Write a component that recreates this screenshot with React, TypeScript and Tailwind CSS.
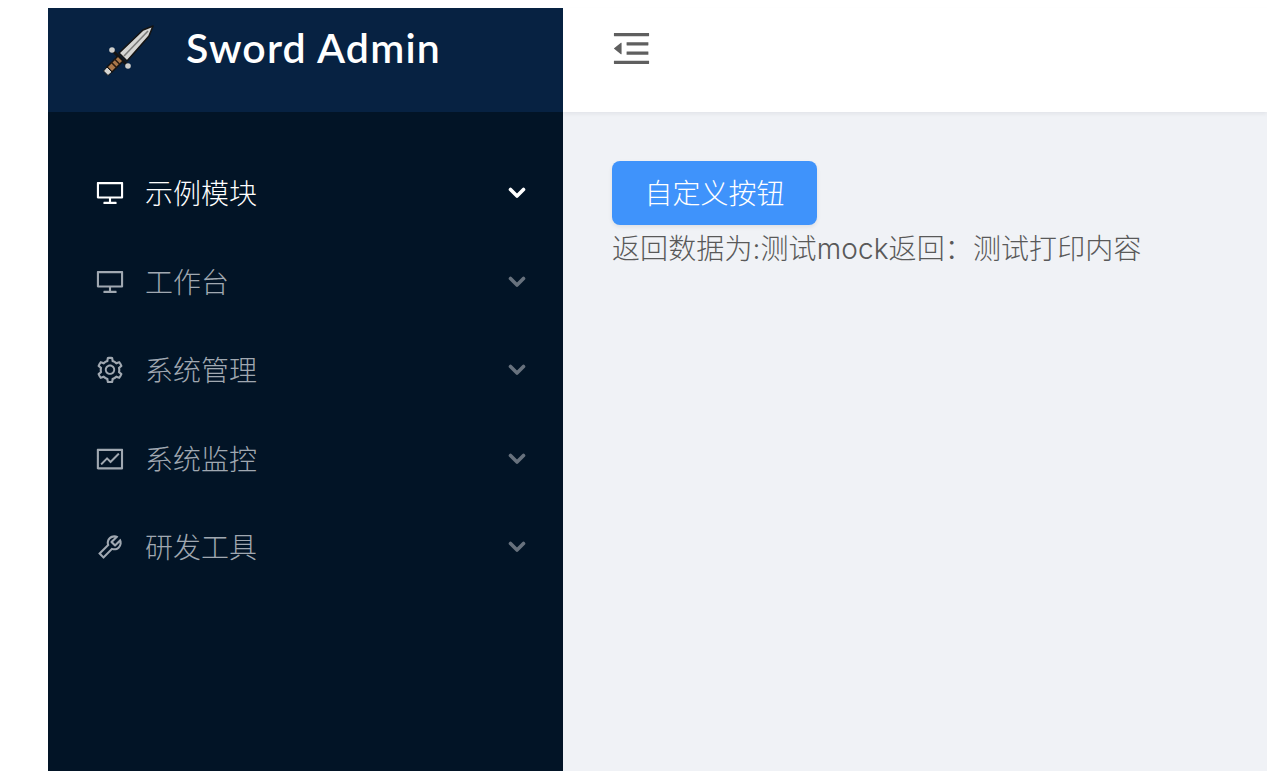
import { AiOutlineDesktop, AiOutlineSetting, AiOutlineFund, AiOutlineTool, AiOutlineMenuFold } from "react-icons/ai";

const items = [
  { label: "示例模块", Icon: AiOutlineDesktop, active: true },
  { label: "工作台", Icon: AiOutlineDesktop, active: false },
  { label: "系统管理", Icon: AiOutlineSetting, active: false },
  { label: "系统监控", Icon: AiOutlineFund, active: false },
  { label: "研发工具", Icon: AiOutlineTool, active: false },
];

function Sword() {
  return (
    <svg viewBox="0 0 54 52" className="w-[54px] h-[52px] shrink-0">
      <path d="M51 1 L41 5 L17 28 L25 36 L47 11 Z" fill="#d6d6d3" stroke="#141414" strokeWidth="1.6" strokeLinejoin="round" />
      <path d="M46 6 L22 31" stroke="#7c7c7a" strokeWidth="1.6" />
      <path d="M11 26 L25 40" stroke="#141414" strokeWidth="3" />
      <circle cx="10" cy="25" r="2.8" fill="#cfcfcc" />
      <circle cx="26" cy="41" r="2.8" fill="#cfcfcc" />
      <path d="M16 31 L21 36 L10 47 L5 42 Z" fill="#a9774a" stroke="#141414" strokeWidth="1.5" strokeLinejoin="round" />
      <path d="M12.5 34 L17.5 39 M9.5 37.5 L14.5 42.5" stroke="#2a1d12" strokeWidth="1.6" />
      <path d="M5 42 L10 47 L6 50.5 L1.5 46 Z" fill="#d6d6d3" stroke="#141414" strokeWidth="1" strokeLinejoin="round" />
    </svg>
  );
}

function Chevron({ active }: { active: boolean }) {
  return (
    <svg viewBox="0 0 18 12" className={active ? "w-[18px] h-[12px] text-white" : "w-[18px] h-[12px] text-[#67717d]"}>
      <path d="M2.5 2.5 L9 9 L15.5 2.5" fill="none" stroke="currentColor" strokeWidth="3.6" strokeLinecap="round" strokeLinejoin="round" />
    </svg>
  );
}

export default function App() {
  return (
    <div className="h-[771px] overflow-hidden bg-white pt-[8px] pl-[48px] flex font-['Inter','Noto_Sans_CJK_SC',sans-serif]">
      <aside className="w-[515px] shrink-0 bg-[#021426] flex flex-col">
        <div className="h-[104px] bg-[#072242] flex pl-[54px] pt-[17px] shrink-0">
          <Sword />
          <span className="ml-[30px] -mt-[2px] text-[41px] leading-[50px] tracking-[1.2px] font-semibold text-white font-['Lato',sans-serif]">Sword Admin</span>
        </div>
        <nav className="pt-[37px] flex flex-col">
          {items.map(({ label, Icon, active }) => (
            <div
              key={label}
              className={active ? "h-[88.5px] pl-[47px] pr-[37px] flex items-center text-white" : "h-[88.5px] pl-[47px] pr-[37px] flex items-center text-[#a0a8b1]"}
            >
              <Icon className="w-[30px] h-[30px] shrink-0" />
              <span className="ml-[20px] mt-[2px] flex-1 text-[28px] leading-[40px] font-light">{label}</span>
              <Chevron active={active} />
            </div>
          ))}
        </nav>
      </aside>
      <main className="flex-1 min-w-0 bg-[#f0f2f6] flex flex-col">
        <header className="h-[104px] shrink-0 bg-white shadow-[0_2px_4px_rgba(0,21,41,0.06)] pl-[46px] flex items-center pb-[24px]">
          <AiOutlineMenuFold className="w-[45px] h-[45px] text-[#5f5f5f]" />
        </header>
        <div className="pt-[49px] pl-[49px]">
          <button className="w-[205px] h-[64px] rounded-[8px] bg-[#3f93fb] pt-[2px] text-white text-[28px] font-light shadow-[0_2px_4px_rgba(0,0,0,0.08)]">自定义按钮</button>
          <p className="mt-[2px] text-[28px] leading-[44px] tracking-[0.1px] font-light text-[#595959] whitespace-nowrap">返回数据为:测试mock返回：测试打印内容</p>
        </div>
      </main>
    </div>
  );
}
